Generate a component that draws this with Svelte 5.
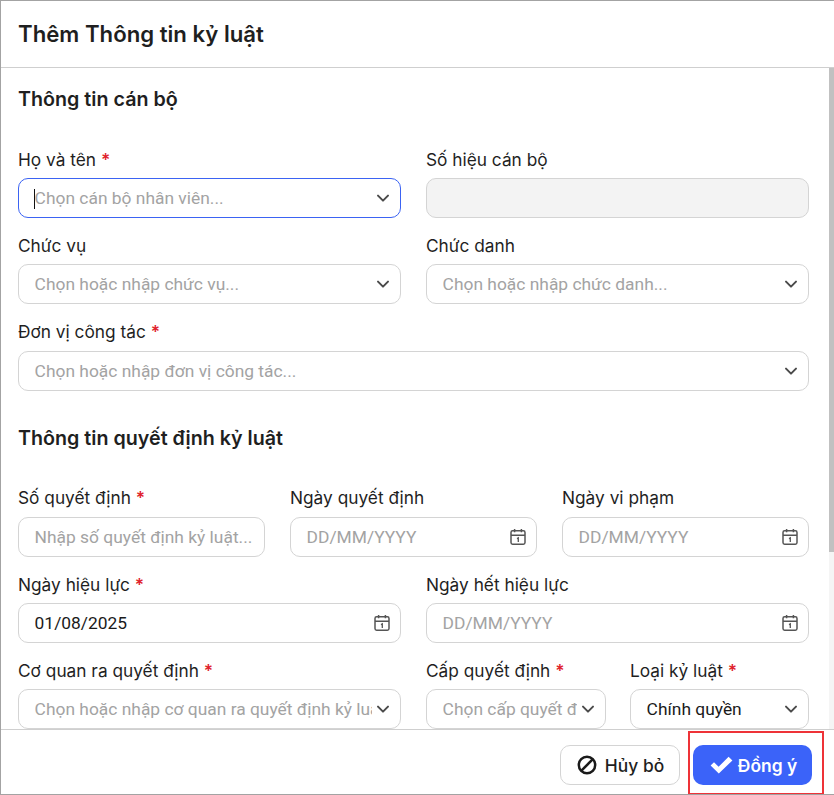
<script>
  const Req = true;
</script>

{#snippet chevron()}
  <svg class="chev" width="14" height="14" viewBox="0 0 14 14" aria-hidden="true"><path d="M2 4.6 7 9.6 12 4.6" fill="none" stroke="#4a4a4a" stroke-width="2" stroke-linecap="round" stroke-linejoin="round"/></svg>
{/snippet}

{#snippet calendar()}
  <svg class="cal" width="16" height="18" viewBox="0 0 16 18" aria-hidden="true">
    <rect x="1" y="2.8" width="14" height="13.4" rx="1.6" fill="none" stroke="#555" stroke-width="1.5"/>
    <path d="M1 7.2H15M4.6 1V4.2M11.4 1V4.2" fill="none" stroke="#555" stroke-width="1.5"/>
    <path d="M7 10.6 8.3 9.9V14" fill="none" stroke="#555" stroke-width="1.3"/>
  </svg>
{/snippet}

{#snippet field(label, req, text, kind, cls)}
  <div class="field {cls || ''}">
    <div class="label">{label}{#if req}{' '}<span class="req">*</span>{/if}</div>
    <div class="input {kind}">
      <span class="txt">{text}</span>
      {#if kind.includes('sel')}{@render chevron()}{/if}
      {#if kind.includes('date')}{@render calendar()}{/if}
    </div>
  </div>
{/snippet}

<div class="dialog">
  <header class="head">Thêm Thông tin kỷ luật</header>
  <div class="body">
    <div class="scrollbar"><div class="thumb"></div></div>
    <h2 class="first">Thông tin cán bộ</h2>
    <div class="row">
      <div class="field">
        <div class="label">Họ và tên <span class="req">*</span></div>
        <div class="input sel focus">
          <span class="caret"></span>
          <span class="txt ph">Chọn cán bộ nhân viên...</span>
          {@render chevron()}
        </div>
      </div>
      {@render field('Số hiệu cán bộ', false, '', 'disabled')}
    </div>
    <div class="row">
      {@render field('Chức vụ', false, 'Chọn hoặc nhập chức vụ...', 'sel ph')}
      {@render field('Chức danh', false, 'Chọn hoặc nhập chức danh...', 'sel ph')}
    </div>
    <div class="row">
      {@render field('Đơn vị công tác', true, 'Chọn hoặc nhập đơn vị công tác...', 'sel ph')}
    </div>

    <h2 class="second">Thông tin quyết định kỷ luật</h2>
    <div class="row">
      {@render field('Số quyết định', true, 'Nhập số quyết định kỷ luật...', 'ph')}
      {@render field('Ngày quyết định', false, 'DD/MM/YYYY', 'date ph')}
      {@render field('Ngày vi phạm', false, 'DD/MM/YYYY', 'date ph')}
    </div>
    <div class="row">
      {@render field('Ngày hiệu lực', true, '01/08/2025', 'date')}
      {@render field('Ngày hết hiệu lực', false, 'DD/MM/YYYY', 'date ph')}
    </div>
    <div class="row last">
      {@render field('Cơ quan ra quyết định', true, 'Chọn hoặc nhập cơ quan ra quyết định kỷ luật...', 'sel ph')}
      {@render field('Cấp quyết định', true, 'Chọn cấp quyết định...', 'sel ph', 'cap')}
      {@render field('Loại kỷ luật', true, 'Chính quyền', 'sel', 'loai')}
    </div>
  </div>
  <footer class="foot">
    <button class="btn cancel">
      <svg width="22" height="22" viewBox="0 0 22 22" aria-hidden="true"><circle cx="11" cy="11" r="8.2" fill="none" stroke="#1a1a1a" stroke-width="2.5"/><path d="M5.2 16.8 16.8 5.2" stroke="#1a1a1a" stroke-width="2.5"/></svg>
      Hủy bỏ
    </button>
    <button class="btn ok">
      <svg width="23" height="18" viewBox="0 0 23 18" aria-hidden="true"><path d="M0.6 9.6 4 6.2 8.6 10.8 18.6 0.8 22.4 4.4 8.8 17.6Z" fill="#fff"/></svg>
      Đồng ý
    </button>
    <div class="hl"></div>
  </footer>
</div>

<style>
  :global(body) { margin: 0; background: #fff; }
  .dialog {
    width: 834px; height: 795px; box-sizing: border-box;
    border: 1px solid #a3a3a3; border-right: 0;
    display: flex; flex-direction: column; overflow: hidden;
    font-family: Inter, "Liberation Sans", sans-serif; color: #1f1f1f; background: #fff;
  }
  .head {
    height: 67px; box-sizing: border-box; flex: none;
    padding: 0 17px 2px; display: flex; align-items: center;
    font-size: 22.2px; font-weight: 600; border-bottom: 1px solid #cfcfcf;
  }
  .body {
    flex: 1; min-height: 0; overflow: hidden; position: relative;
    padding: 0 25px 0 17px;
  }
  .scrollbar { position: absolute; right: 0; top: 0; bottom: 0; width: 5px; background: #f5f5f5; }
  .thumb { height: 484px; background: #c1c1c1; }
  h2 { margin: 0; font-size: 19.7px; font-weight: 600; line-height: 24px; }
  h2.first { padding-top: 19px; padding-bottom: 38.6px; }
  h2.second { padding-top: 17px; padding-bottom: 38.4px; }
  .row { display: flex; gap: 25px; margin-bottom: 18px; }
  .row.last { margin-bottom: 0; }
  .field { flex: 1 1 0; min-width: 0; }
  .row.last .field.cap { flex: 0 0 180px; }
  .row.last .field.loai { flex: 0 0 179px; margin-left: -1px; }
  .row.last .field:first-child { flex: 0 0 383px; }
  .label { font-size: 17.3px; line-height: 20.4px; margin-bottom: 8px; white-space: nowrap; }
  .req { color: #e0222c; font-weight: 600; }
  .input {
    height: 40px; box-sizing: border-box; border: 1px solid #d4d4d4; border-radius: 10px;
    display: flex; align-items: center; padding: 0 10px 0 15.6px; gap: 4px; background: #fff;
    font-family: Roboto, "Liberation Sans", sans-serif; font-size: 17.4px; color: #1a1a1a;
    position: relative;
  }
  .input.focus { border-color: #3b63f3; }
  .input.disabled { background: #f3f3f3; }
  .txt { flex: 1; min-width: 0; overflow: hidden; white-space: nowrap; letter-spacing: 0; }
  .input.ph .txt, .txt.ph { color: #a3a3a3; }
  .caret { position: absolute; left: 15px; top: 10px; width: 1px; height: 20px; background: #111; }
  .chev, .cal { flex: none; }
  .foot {
    height: 65px; flex: none; box-sizing: border-box; border-top: 1px solid #cfcfcf;
    position: relative; display: flex; justify-content: flex-end; align-items: flex-start;
    padding: 15px 22px 0 0; gap: 13px;
  }
  .btn {
    height: 40px; box-sizing: border-box; border-radius: 10px; display: flex; align-items: center; justify-content: center;
    font-family: Inter, "Liberation Sans", sans-serif; font-size: 17.4px; font-weight: 500; padding: 0; gap: 7px;
  }
  .cancel { width: 120px; background: #fff; border: 1px solid #d4d4d4; color: #1f1f1f; }
  .ok { width: 119px; background: #3b63f9; border: 0; color: #fff; font-weight: 600; gap: 5px; padding-left: 2px; }
  .hl { position: absolute; top: 1px; right: 10px; width: 136px; height: 64px; box-sizing: border-box; border: 2px solid #ee3338; pointer-events: none; }
</style>
